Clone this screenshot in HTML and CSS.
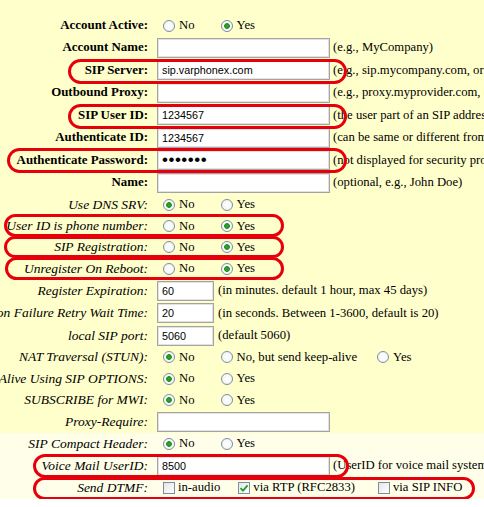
FILE: index.html
```html
<!DOCTYPE html>
<html>
<head>
<meta charset="utf-8">
<title>SIP Account</title>
<link rel="stylesheet" href="styles.css">
</head>
<body>
<div class="page">
  <div class="sec top">
    <div class="row r"><div class="lbl b">Account Active:</div><div class="ctl opts yn"><label class="opt"><input type="radio" name="aa"> No</label><label class="opt"><input type="radio" name="aa" checked> Yes</label></div></div>
    <div class="row"><div class="lbl b">Account Name:</div><div class="ctl"><input class="txt" type="text" value=""><span class="note">(e.g., MyCompany)</span></div></div>
    <div class="row"><div class="lbl b">SIP Server:</div><div class="ctl"><input class="txt" type="text" value="sip.varphonex.com"><span class="note">(e.g., sip.mycompany.com, or IP address)</span></div></div>
    <div class="row"><div class="lbl b">Outbound Proxy:</div><div class="ctl"><input class="txt" type="text" value=""><span class="note">(e.g., proxy.myprovider.com, or IP address, if any)</span></div></div>
    <div class="row"><div class="lbl b">SIP User ID:</div><div class="ctl"><input class="txt" type="text" value="1234567"><span class="note">(the user part of an SIP address)</span></div></div>
    <div class="row"><div class="lbl b">Authenticate ID:</div><div class="ctl"><input class="txt" type="text" value="1234567"><span class="note">(can be same or different from SIP User ID)</span></div></div>
    <div class="row"><div class="lbl b">Authenticate Password:</div><div class="ctl"><input class="txt pw" type="password" value="1234567"><span class="note">(not displayed for security protection)</span></div></div>
    <div class="row"><div class="lbl b">Name:</div><div class="ctl"><input class="txt" type="text" value=""><span class="note">(optional, e.g., John Doe)</span></div></div>
    <div class="row r"><div class="lbl i">Use DNS SRV:</div><div class="ctl opts yn"><label class="opt"><input type="radio" name="dns" checked> No</label><label class="opt"><input type="radio" name="dns"> Yes</label></div></div>
    <div class="row r"><div class="lbl i">User ID is phone number:</div><div class="ctl opts yn"><label class="opt"><input type="radio" name="uid"> No</label><label class="opt"><input type="radio" name="uid" checked> Yes</label></div></div>
    <div class="row r"><div class="lbl i">SIP Registration:</div><div class="ctl opts yn"><label class="opt"><input type="radio" name="reg"> No</label><label class="opt"><input type="radio" name="reg" checked> Yes</label></div></div>
    <div class="row r"><div class="lbl i">Unregister On Reboot:</div><div class="ctl opts yn"><label class="opt"><input type="radio" name="unr"> No</label><label class="opt"><input type="radio" name="unr" checked> Yes</label></div></div>
    <div class="row"><div class="lbl i">Register Expiration:</div><div class="ctl"><input class="txt sm" type="text" value="60"><span class="note">(in minutes. default 1 hour, max 45 days)</span></div></div>
    <div class="row"><div class="lbl i">Registration Failure Retry Wait Time:</div><div class="ctl"><input class="txt sm" type="text" value="20"><span class="note">(in seconds. Between 1-3600, default is 20)</span></div></div>
    <div class="row"><div class="lbl i">local SIP port:</div><div class="ctl"><input class="txt sm" type="text" value="5060"><span class="note">(default 5060)</span></div></div>
    <div class="row r"><div class="lbl i">NAT Traversal (STUN):</div><div class="ctl opts nat"><label class="opt"><input type="radio" name="nat" checked> No</label><label class="opt"><input type="radio" name="nat"> No, but send keep-alive</label><label class="opt"><input type="radio" name="nat"> Yes</label></div></div>
    <div class="row r"><div class="lbl i">Keep Alive Using SIP OPTIONS:</div><div class="ctl opts yn"><label class="opt"><input type="radio" name="ka" checked> No</label><label class="opt"><input type="radio" name="ka"> Yes</label></div></div>
    <div class="row r"><div class="lbl i">SUBSCRIBE for MWI:</div><div class="ctl opts yn"><label class="opt"><input type="radio" name="mwi" checked> No</label><label class="opt"><input type="radio" name="mwi"> Yes</label></div></div>
    <div class="row"><div class="lbl i">Proxy-Require:</div><div class="ctl"><input class="txt" type="text" value=""></div></div>
  </div>
  <div class="sec low">
    <div class="row r"><div class="lbl i">SIP Compact Header:</div><div class="ctl opts yn"><label class="opt"><input type="radio" name="ch" checked> No</label><label class="opt"><input type="radio" name="ch"> Yes</label></div></div>
    <div class="row"><div class="lbl i">Voice Mail UserID:</div><div class="ctl"><input class="txt" type="text" value="8500"><span class="note">(UserID for voice mail system)</span></div></div>
    <div class="row d"><div class="lbl i">Send DTMF:</div><div class="ctl opts dtmf">
      <label class="opt"><span class="cb"></span>in-audio</label>
      <label class="opt"><span class="cb"><svg viewBox="0 0 10 10" width="10" height="10"><path d="M1.5 5.2 L4 7.6 L8.6 2.4" fill="none" stroke="#21a121" stroke-width="1.8"/></svg></span>via RTP (RFC2833)</label>
      <label class="opt"><span class="cb"></span>via SIP INFO</label>
    </div></div>
  </div>
  <div class="oval o1"></div>
  <div class="oval o2"></div>
  <div class="oval o3"></div>
  <div class="oval o4"></div>
  <div class="oval o5"></div>
  <div class="oval o6"></div>
  <div class="oval o7"></div>
  <div class="oval o8"></div>
</div>
</body>
</html>
```

FILE: styles.css
```css
html, body {
  margin: 0;
  padding: 0;
  background: #ffffff;
}
.page {
  position: relative;
  width: 484px;
  overflow: hidden;
  font-family: "Liberation Serif", "Times New Roman", serif;
  font-size: 12.7px;
  color: #000;
}
.sec.top {
  background: #ffffcc;
  padding-top: 15.3px;
}
.sec.low {
  background: #ffffe9;
}
.row {
  display: grid;
  grid-template-columns: 148px auto;
  column-gap: 9px;
  align-items: center;
  height: 22.5px;
}
.row.r {
  height: 21.3px;
}
.row.d {
  height: 22px;
}
.lbl {
  display: flex;
  justify-content: flex-end;
  white-space: nowrap;
}
.lbl.b {
  font-weight: bold;
  font-size: 12.9px;
}
.lbl.i {
  font-style: italic;
  font-size: 13.5px;
}
.ctl {
  display: flex;
  align-items: center;
  white-space: nowrap;
}
.opts {
  padding-left: 6px;
}
.opts.yn { gap: 26px; }
.opts.nat { gap: 20px; }
.opts.nat .opt:nth-child(2) { margin-left: 6px; }
.opts.dtmf { gap: 18px; }
.opts.dtmf .opt:nth-child(3) { margin-left: 5px; }
.opt {
  display: flex;
  align-items: center;
  gap: 4px;
}
.opt input[type="radio"] {
  -webkit-appearance: none;
  appearance: none;
  margin: 0;
  width: 12px;
  height: 12px;
  border: 1px solid #7d8d9c;
  border-radius: 50%;
  background: radial-gradient(circle at 50% 50%, #ffffff 0, #eef0f2 100%);
  box-sizing: border-box;
}
.opt input[type="radio"]:checked {
  background: radial-gradient(circle at 50% 50%, #35ab35 0, #1f8e1f 2.5px, #ffffff 3.2px, #eef0f2 100%);
}
.cb {
  display: inline-flex;
  align-items: center;
  justify-content: center;
  width: 12px;
  height: 12px;
  box-sizing: border-box;
  border: 1px solid #7d8d9c;
  background: linear-gradient(135deg, #e4e6e8, #ffffff);
  margin-right: -1px;
}
.txt {
  box-sizing: border-box;
  width: 173px;
  height: 20px;
  margin: 0;
  padding: 0 0 0 4px;
  border: 1px solid #a4a4a4;
  box-shadow: inset 0 0 0 1px #e2e2e2;
  background: #ffffff;
  font-family: "Liberation Sans", Arial, sans-serif;
  font-size: 10.8px;
  color: #000;
  outline: none;
}
.txt.sm {
  width: 57px;
}
.txt.pw {
  font-size: 17px;
  letter-spacing: 0.5px;
}
.note {
  margin-left: 3px;
}
.txt.sm + .note {
  margin-left: 4px;
}
.oval {
  position: absolute;
  box-sizing: border-box;
  border: 3px solid #e6000c;
  border-radius: 14px;
}
.o1 { left: 68px; top: 59px; width: 279px; height: 25px; }
.o2 { left: 68px; top: 104px; width: 279px; height: 25px; }
.o3 { left: 7px; top: 148px; width: 340px; height: 25px; }
.o4 { left: 4px; top: 214px; width: 280px; height: 23px; }
.o5 { left: 4px; top: 236px; width: 280px; height: 22px; }
.o6 { left: 5px; top: 257px; width: 279px; height: 23px; }
.o7 { left: 33px; top: 454px; width: 316px; height: 24px; }
.o8 { left: 33px; top: 477px; width: 442px; height: 23px; }
```
